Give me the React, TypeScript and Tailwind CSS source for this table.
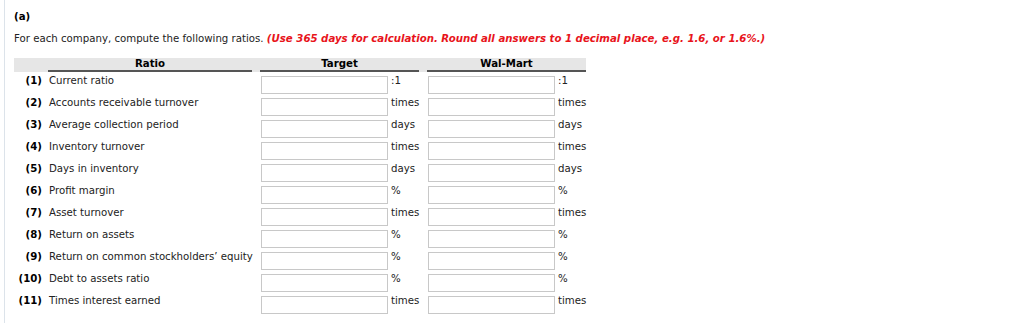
import React from "react";

const rows: [string, string, string][] = [
  ["(1)", "Current ratio", ":1"],
  ["(2)", "Accounts receivable turnover", "times"],
  ["(3)", "Average collection period", "days"],
  ["(4)", "Inventory turnover", "times"],
  ["(5)", "Days in inventory", "days"],
  ["(6)", "Profit margin", "%"],
  ["(7)", "Asset turnover", "times"],
  ["(8)", "Return on assets", "%"],
  ["(9)", "Return on common stockholders\u2019 equity", "%"],
  ["(10)", "Debt to assets ratio", "%"],
  ["(11)", "Times interest earned", "times"],
];

function Cell({ unit }: { unit: string }) {
  return (
    <div className="flex items-start pl-[1px]">
      <input
        type="text"
        className="mt-[2px] h-[18px] w-[127px] border border-[#c8c8c8] bg-white outline-none"
      />
      <span className="ml-[3px] leading-[14px] text-[#222]">{unit}</span>
    </div>
  );
}

export default function App() {
  return (
    <div
      className="min-h-[323px] w-[1024px] bg-white text-[10.2px] text-[#222]"
      style={{ fontFamily: '"DejaVu Sans", Verdana, sans-serif' }}
    >
      <div className="ml-[4px] min-h-[323px] border-l border-[#dce3ea] pl-[9px] pt-[10px]">
        <div className="font-bold leading-[14px] text-black">(a)</div>
        <div className="mt-[8px] whitespace-nowrap leading-[14px]">
          For each company, compute the following ratios.{" "}
          <span className="font-bold italic text-[#e8141b]">
            (Use 365 days for calculation. Round all answers to 1 decimal place, e.g. 1.6, or 1.6%.)
          </span>
        </div>
        <div className="mt-[12px] grid w-[572px] grid-cols-[34px_204px_8px_159px_8px_159px]">
          <div className="h-[14px] bg-[#e6e6e6]" />
          <div className="h-[14px] border-b-2 border-[#555] bg-[#e6e6e6] text-center font-bold leading-[12px] text-black">
            Ratio
          </div>
          <div className="h-[14px] bg-[#e6e6e6]" />
          <div className="h-[14px] border-b-2 border-[#555] bg-[#e6e6e6] text-center font-bold leading-[12px] text-black">
            Target
          </div>
          <div className="h-[14px] bg-[#e6e6e6]" />
          <div className="h-[14px] border-b-2 border-[#555] bg-[#e6e6e6] text-center font-bold leading-[12px] text-black">
            Wal-Mart
          </div>
          {rows.map(([n, label, unit], i) => (
            <React.Fragment key={i}>
              <div className={`h-[22px] pr-[6px] text-right font-bold leading-[14px] text-black ${i === 0 ? "mt-[2px]" : ""}`}>
                {n}
              </div>
              <div className={`h-[22px] whitespace-nowrap pl-[1px] leading-[14px] ${i === 0 ? "mt-[2px]" : ""}`}>{label}</div>
              <div className={`h-[22px] ${i === 0 ? "mt-[2px]" : ""}`} />
              <div className={`h-[22px] ${i === 0 ? "mt-[2px]" : ""}`}>
                <Cell unit={unit} />
              </div>
              <div className={`h-[22px] ${i === 0 ? "mt-[2px]" : ""}`} />
              <div className={`h-[22px] ${i === 0 ? "mt-[2px]" : ""}`}>
                <Cell unit={unit} />
              </div>
            </React.Fragment>
          ))}
        </div>
      </div>
    </div>
  );
}
